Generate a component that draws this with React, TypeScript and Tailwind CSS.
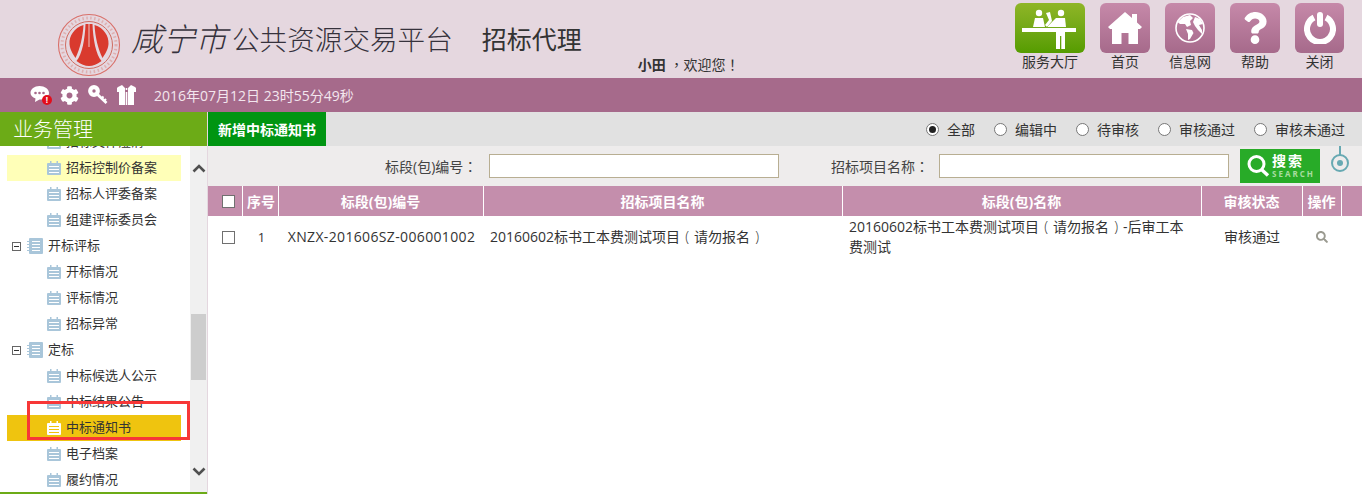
import React from "react";
import { FaCog, FaQuestion, FaSearch } from "react-icons/fa";

const font = { fontFamily: '"Open Sans","Noto Sans CJK SC",sans-serif' };

function P({ children }: { children: React.ReactNode }) {
  return <span className="font-['Noto_Sans_CJK_TC']">{children}</span>;
}

function Paren({ children }: { children: React.ReactNode }) {
  return <span className="inline-block w-[14px] text-center font-light">{children}</span>;
}

function Logo() {
  return (
    <svg width="64" height="64" viewBox="0 0 64 64" className="shrink-0">
      <circle cx="32" cy="32" r="30.500" fill="none" stroke="#d9706a" strokeWidth="1.100" />
      <circle cx="32" cy="32" r="27" fill="none" stroke="#d98a84" strokeWidth="3" strokeDasharray="1.500 2.500" opacity="0.5" />
      <circle cx="32" cy="32" r="23.500" fill="none" stroke="#cf6d62" strokeWidth="1" />
      <path d="M26.500 12 C17 15 12 23 12.500 31 C13 37 16 41 18.500 45 C23 36 25.800 24 26.500 12Z" fill="#d93a2e" />
      <path d="M37.500 12 C47 15 52 23 51.500 31 C51 37 48 41 45.500 45 C41 36 38.200 24 37.500 12Z" fill="#d93a2e" />
      <path d="M28.500 11 C28 26 25 42 19.500 48 C24 51.500 28 53 32 53 C36 53 40 51.500 44.500 48 C39 42 36 26 35.500 11Z" fill="#d93a2e" />
      <path d="M32 11 V34" stroke="#eed9d8" strokeWidth="0.900" />
    </svg>
  );
}

function ServiceIcon() {
  return (
    <svg width="70" height="50" viewBox="0 0 70 50">
      <rect x="7" y="25" width="54" height="4" fill="#fff" />
      <circle cx="24" cy="10" r="3.200" fill="#fff" />
      <circle cx="46" cy="10" r="3.200" fill="#fff" />
      <path d="M18 24 L20 15 L28 15 L30 24Z" fill="#fff" />
      <path d="M31 10 L35 9 L37 18 L32 24 L30 22 L34 17Z" fill="#fff" />
      <path d="M33 23 L41 15 L50 15 L51 24 L33 24Z" fill="#fff" />
      <path d="M41 29 H50 V46 H46.300 V33 H45 V46 H41Z" fill="#fff" />
    </svg>
  );
}

function HomeIcon() {
  return (
    <svg width="34" height="32" viewBox="0 0 34 32">
      <path d="M0 15 L17 0 L24 6 V2 H29 V10.500 L34 15 L32 17 H30 V32 H20.500 V21 H13.500 V32 H4 V17 H2Z" fill="#fff" />
    </svg>
  );
}

function GlobeIcon() {
  return (
    <svg width="30" height="30" viewBox="0 0 30 30">
      <circle cx="15" cy="15" r="14" fill="none" stroke="#fff" strokeWidth="1.600" />
      <path d="M8 4 L15 2 L18 5 L15 8 L16 12 L12 14 L10 11 L5 11 L2.500 9Z" fill="#fff" />
      <path d="M11 16 L17 17 L18.500 20 L15 26 L13 27 L13 21Z" fill="#fff" />
      <path d="M20 4 L25 6 L28 11 L24 12 L27 17 L27 21 L23 17 L20 13 L18 9Z" fill="#fff" />
    </svg>
  );
}

function PowerIcon() {
  return (
    <svg width="32" height="32" viewBox="0 0 32 32">
      <path d="M10 5.500 A13 13 0 1 0 22 5.500" fill="none" stroke="#fff" strokeWidth="6" />
      <rect x="13" y="0" width="6" height="15" rx="3" fill="#fff" />
    </svg>
  );
}

function Tile({ label, w, green, children }: { label: string; w: string; green?: boolean; children: React.ReactNode }) {
  return (
    <div className="flex flex-col items-center">
      <div
        className={`${w} h-[50px] rounded-[6px] flex items-center justify-center text-white ${
          green ? "bg-gradient-to-b from-[#8fb526] to-[#559c00]" : "bg-gradient-to-b from-[#c689a9] to-[#a66a8b]"
        }`}
      >
        {children}
      </div>
      <div className="text-[14px] leading-[18px] text-[#333]">{label}</div>
    </div>
  );
}

function BubbleIcon() {
  return (
    <span className="relative w-[21px] h-[20px] block">
      <svg width="20" height="18" viewBox="0 0 20 18">
        <path d="M9.500 1 C14.700 1 19 4 19 8 C19 12 14.700 14.500 9.500 14.500 L5 17 L5.500 13.600 C2.500 12.500 0.500 10.500 0.500 8 C0.500 4 4.500 1 9.500 1Z" fill="#fff" />
        <circle cx="5.500" cy="8" r="1.300" fill="#a66a8b" />
        <circle cx="9.500" cy="8" r="1.300" fill="#a66a8b" />
        <circle cx="13.500" cy="8" r="1.300" fill="#a66a8b" />
      </svg>
      <span className="absolute right-[-1px] bottom-[0px] w-[10px] h-[10px] rounded-full bg-[#e30d1b] text-white text-[8px] leading-[10px] text-center font-bold">!</span>
    </span>
  );
}

function KeyIcon() {
  return (
    <svg width="20" height="20" viewBox="0 0 20 20">
      <circle cx="6" cy="6" r="3.800" fill="none" stroke="#fff" strokeWidth="4.200" />
      <path d="M9 9 L18.500 18" stroke="#fff" strokeWidth="2.800" />
      <path d="M13.500 13.500 L15.500 11.500 M16 16 L18 14" stroke="#fff" strokeWidth="2" />
    </svg>
  );
}

function GiftIcon() {
  return (
    <svg width="19" height="20" viewBox="0 0 19 20">
      <path d="M1 2 L5 0 L8 3 V20 H2 V7 H0 V3Z" fill="#fff" />
      <path d="M18 2 L14 0 L11 3 V20 H17 V7 H19 V3Z" fill="#fff" />
      <rect x="8.700" y="7" width="1.600" height="13" fill="#fff" />
      <rect x="8.700" y="3" width="1.600" height="2" fill="#fff" />
    </svg>
  );
}

function LeafIcon({ active }: { active?: boolean }) {
  const c = active ? "#fff" : "#a9c6da";
  const l = active ? "#efc40f" : "#fff";
  return (
    <svg width="14" height="14" viewBox="0 0 14 14" className="shrink-0">
      <rect x="0" y="2" width="14" height="12" rx="1" fill={c} />
      <rect x="3" y="0" width="1.500" height="3" fill={c} />
      <rect x="9.500" y="0" width="1.500" height="3" fill={c} />
      <rect x="2" y="5" width="10" height="1" fill={l} />
      <rect x="2" y="8" width="10" height="1" fill={l} />
      <rect x="2" y="11" width="10" height="1" fill={l} />
    </svg>
  );
}

function FolderIcon() {
  return (
    <svg width="16" height="16" viewBox="0 0 16 16" className="shrink-0">
      <rect x="2" y="0" width="14" height="16" rx="1" fill="#a9c6da" />
      <rect x="5" y="3" width="8" height="1" fill="#fff" />
      <rect x="5" y="6" width="8" height="1" fill="#fff" />
      <rect x="5" y="9" width="8" height="1" fill="#fff" />
      <rect x="5" y="12" width="8" height="1" fill="#fff" />
      <rect x="0" y="3" width="3" height="1" fill="#a9c6da" />
      <rect x="0" y="6" width="3" height="1" fill="#a9c6da" />
      <rect x="0" y="9" width="3" height="1" fill="#a9c6da" />
      <rect x="0" y="12" width="3" height="1" fill="#a9c6da" />
    </svg>
  );
}

function Leaf({ text, state }: { text: string; state?: "hl" | "active" }) {
  const bg = state === "hl" ? "bg-[#ffffb8]" : state === "active" ? "bg-[#efc40f]" : "";
  return (
    <div className={`h-[26px] w-[174px] ml-[7px] pl-[40px] flex items-center gap-[5px] text-[13px] text-[#333] ${bg}`}>
      <LeafIcon active={state === "active"} />
      <span>{text}</span>
    </div>
  );
}

function Group({ text }: { text: string }) {
  return (
    <div className="h-[26px] pl-[12px] flex items-center text-[13px] text-[#333]">
      <span className="w-[9px] h-[9px] border border-[#666] flex items-center justify-center shrink-0">
        <span className="w-[5px] h-px bg-[#333]" />
      </span>
      <span className="ml-[6px]">
        <FolderIcon />
      </span>
      <span className="ml-[5px]">{text}</span>
    </div>
  );
}

function Radio({ label, on }: { label: string; on?: boolean }) {
  return (
    <label className="flex items-center gap-[8px] text-[14px] text-[#333]">
      <span className="w-[13px] h-[13px] rounded-full border border-[#777] bg-white flex items-center justify-center">
        {on && <span className="w-[7px] h-[7px] rounded-full bg-[#222]" />}
      </span>
      {label}
    </label>
  );
}

function Check() {
  return <span className="block w-[13px] h-[13px] border border-[#707070] bg-white ml-[14px]" />;
}

const heads = ["标段(包)编号", "招标项目名称", "标段(包)名称", "审核状态", "操作"];

export default function App() {
  return (
    <div className="w-[1362px] h-[494px] overflow-hidden bg-white flex flex-col" style={font}>
      <header className="h-[78px] bg-[#e5d7df] flex shrink-0">
        <div className="ml-[57px] mt-[13px] h-[64px]">
          <Logo />
        </div>
        <div className="ml-[10px] mt-[15px] h-[48px] flex items-center text-[#36323c] font-light">
          <span className="text-[32px] italic leading-[48px]">咸宁市</span>
          <span className="text-[27.600px] ml-[5px] leading-[48px]">公共资源交易平台</span>
          <span className="text-[25px] ml-[29px] leading-[48px] text-[#333] font-normal">招标代理</span>
        </div>
        <div className="ml-[56px] mt-[55px] text-[14px] leading-[18px] text-[#333] whitespace-nowrap">
          <b>小田</b> <P>，</P>欢迎您<P>！</P>
        </div>
        <div className="ml-auto mr-[18px] mt-[3px] flex gap-[15px]">
          <Tile label="服务大厅" w="w-[70px]" green>
            <ServiceIcon />
          </Tile>
          <Tile label="首页" w="w-[50px]">
            <HomeIcon />
          </Tile>
          <Tile label="信息网" w="w-[50px]">
            <GlobeIcon />
          </Tile>
          <Tile label="帮助" w="w-[50px]">
            <FaQuestion size={32} />
          </Tile>
          <Tile label="关闭" w="w-[49px]">
            <PowerIcon />
          </Tile>
        </div>
      </header>

      <div className="h-[34px] bg-[#a66a8b] flex items-center pl-[30px] text-white shrink-0">
        <BubbleIcon />
        <FaCog size={19} className="ml-[9px]" />
        <span className="ml-[9px]">
          <KeyIcon />
        </span>
        <span className="ml-[9px]">
          <GiftIcon />
        </span>
        <span className="ml-[18px] text-[14px] text-[#f3e6ee]">2016年07月12日 23时55分49秒</span>
      </div>

      <div className="flex flex-1 min-h-0">
        <aside className="w-[208px] shrink-0 flex flex-col border-r border-[#e4d7df] relative">
          <div className="h-[34px] bg-[#6cab17] text-white text-[20px] leading-[36px] pl-[13px] shrink-0 font-light">业务管理</div>
          <div className="flex flex-1 min-h-0 border-b-2 border-[#6cab17]">
            <div className="w-[190px] overflow-hidden shrink-0">
              <div className="-mt-[18px] pt-[1px]">
                <Leaf text="招标文件澄清" />
                <Leaf text="招标控制价备案" state="hl" />
                <Leaf text="招标人评委备案" />
                <Leaf text="组建评标委员会" />
                <Group text="开标评标" />
                <Leaf text="开标情况" />
                <Leaf text="评标情况" />
                <Leaf text="招标异常" />
                <Group text="定标" />
                <Leaf text="中标候选人公示" />
                <Leaf text="中标结果公告" />
                <Leaf text="中标通知书" state="active" />
                <Leaf text="电子档案" />
                <Leaf text="履约情况" />
              </div>
            </div>
            <div className="flex-1 bg-[#f0f0f0] relative flex flex-col items-center justify-between pt-[18px] pb-[16px]">
              <svg width="14" height="9" viewBox="0 0 14 9"><path d="M1.500 7.500 L7 2 L12.500 7.500" fill="none" stroke="#505050" strokeWidth="2.600" /></svg>
              <svg width="14" height="9" viewBox="0 0 14 9"><path d="M1.500 1.500 L7 7 L12.500 1.500" fill="none" stroke="#505050" strokeWidth="2.600" /></svg>
              <span className="absolute left-[1px] right-[1px] top-[168px] h-[66px] bg-[#cdcdcd]" />
            </div>
          </div>
          <span className="absolute left-[27px] top-[289px] w-[163px] h-[39px] border-[3px] border-[#f73737]" />
        </aside>

        <main className="flex-1 min-w-0 flex flex-col">
          <div className="h-[34px] bg-[#e1e1e1] flex items-center shrink-0">
            <div className="h-full w-[118px] bg-[#009512] text-white text-[14px] font-bold flex items-center justify-center">新增中标通知书</div>
            <div className="ml-auto mr-[17px] flex gap-[19px]">
              <Radio label="全部" on />
              <Radio label="编辑中" />
              <Radio label="待审核" />
              <Radio label="审核通过" />
              <Radio label="审核未通过" />
            </div>
          </div>

          <div className="h-[40px] bg-[#eeecec] flex items-center text-[14px] text-[#444] shrink-0">
            <span className="ml-[177px] w-[104px]">标段(包)编号<P>：</P></span>
            <span className="w-[290px] h-[24px] border border-[#b8ae92] bg-white" />
            <span className="ml-[52px] w-[108px]">招标项目名称<P>：</P></span>
            <span className="w-[290px] h-[24px] border border-[#b8ae92] bg-white" />
            <button className="ml-[11px] w-[80px] h-[34px] bg-[#28ab28] text-white flex items-center pl-[6px] gap-[2px]">
              <svg width="24" height="26" viewBox="0 0 24 26">
                <circle cx="10.500" cy="11" r="7.500" fill="none" stroke="#fff" strokeWidth="3" />
                <path d="M16 17 L22 22.500" stroke="#fff" strokeWidth="3.400" />
              </svg>
              <span className="flex flex-col items-start">
                <span className="text-[14px] leading-[14px] font-bold tracking-[2px]">搜索</span>
                <span className="text-[8px] leading-[9px] mt-[1px] font-bold text-[#a8dda0] tracking-[2px]">SEARCH</span>
              </span>
            </button>
            <svg width="20" height="40" viewBox="0 0 20 40" className="ml-[10px] self-start">
              <path d="M10 0 V9" stroke="#67a9b2" strokeWidth="2" />
              <circle cx="10" cy="17" r="8" fill="none" stroke="#67a9b2" strokeWidth="2" />
              <circle cx="10" cy="17" r="3" fill="#67a9b2" />
            </svg>
          </div>

          <table className="w-full table-fixed border-collapse">
            <colgroup>
              <col className="w-[34px]" />
              <col className="w-[36px]" />
              <col className="w-[205px]" />
              <col className="w-[359px]" />
              <col className="w-[359px]" />
              <col className="w-[101px]" />
              <col className="w-[39px]" />
              <col />
            </colgroup>
            <thead>
              <tr className="h-[30px] bg-[#c48eac] text-white text-[14px]">
                <th className="border-r border-white font-normal p-0"><Check /></th>
                <th className="border-r border-white font-bold p-0 pl-[2px]">序号</th>
                {heads.map((h) => (
                  <th key={h} className="border-r border-white font-bold p-0">{h}</th>
                ))}
                <th className="p-0" />
              </tr>
            </thead>
            <tbody className="text-[14px] leading-[20px] text-[#333]">
              <tr className="h-[42px]">
                <td className="p-0"><Check /></td>
                <td className="p-0 pl-[3px] text-center text-[13px]">1</td>
                <td className="p-0 pl-[2px] text-center tracking-[0.350px]">XNZX-201606SZ-006001002</td>
                <td className="py-0 pl-[7px] pr-0">20160602标书工本费测试项目<Paren>(</Paren>请勿报名<Paren>)</Paren></td>
                <td className="py-0 pl-[7px] pr-[6px]">20160602标书工本费测试项目<Paren>(</Paren>请勿报名<Paren>)</Paren>-后审工本费测试</td>
                <td className="p-0 pl-[1px] text-center">审核通过</td>
                <td className="p-0"><FaSearch size={12} className="text-[#9a9a90] mx-auto" /></td>
                <td className="p-0" />
              </tr>
            </tbody>
          </table>
        </main>
      </div>
    </div>
  );
}
